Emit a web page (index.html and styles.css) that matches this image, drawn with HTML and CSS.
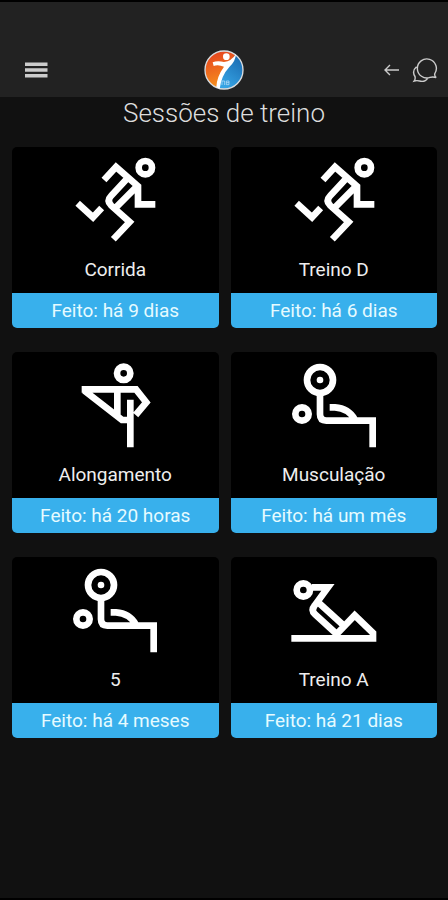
FILE: index.html
```html
<!DOCTYPE html>
<html lang="pt-BR">
<head>
<meta charset="utf-8">
<meta name="viewport" content="width=device-width, initial-scale=1">
<title>Sessões de treino</title>
<link rel="stylesheet" href="styles.css">
</head>
<body>
<svg class="sprite" aria-hidden="true">
  <symbol id="run" viewBox="0 0 300 300">
    <circle cx="241" cy="53" r="20"/>
    <path d="M117 90L153 51L219 109V163H271M188 84L138 138Q124 152 139 167L194 216L145 268M215 110L153 172M38 160L84 202L110 174"/>
  </symbol>
  <symbol id="stretch" viewBox="-15 0 300 300">
    <circle cx="161" cy="55" r="20"/>
    <path d="M181 277V134M181 195H156L43 107M35 103H198L229 142L197 180M142 103V185"/>
  </symbol>
  <symbol id="bench" viewBox="11 0 300 300">
    <circle cx="119" cy="75" r="39"/>
    <circle class="dot" cx="119" cy="75" r="10"/>
    <circle cx="65" cy="177" r="20"/>
    <path d="M119 116V178Q119 197 138 197H277V277M148 157H164Q205 160 223 193"/>
  </symbol>
  <symbol id="situp" viewBox="11 0 300 300">
    <circle cx="69" cy="90" r="20"/>
    <path d="M33 235H278V219L223 166L169 222L104 163Q91 151 102 138L143 82H94M115 128L186 193"/>
  </symbol>
</svg>

<header class="topbar">
  <button class="icon-button menu" type="button" aria-label="Menu">
    <svg width="24" height="16" viewBox="0 0 24 16"><path d="M1 2.2H23.5M1 8H23.5M1 13.8H23.5"/></svg>
  </button>
  <svg class="logo" width="40" height="40" viewBox="0 0 120 120" role="img" aria-label="7">
    <defs>
      <linearGradient id="warm" x1="0" y1="0" x2="0.3" y2="1"><stop offset="0" stop-color="#e43d20"/><stop offset="1" stop-color="#f7941d"/></linearGradient>
      <linearGradient id="cool" x1="1" y1="0" x2="0.4" y2="1"><stop offset="0" stop-color="#1766ad"/><stop offset="1" stop-color="#36a4e4"/></linearGradient>
    </defs>
    <circle cx="60" cy="60" r="57" fill="url(#warm)"/>
    <path d="M94 14A57 57 0 0 1 40 113C43 82 58 60 94 14Z" fill="url(#cool)"/>
    <circle cx="60" cy="60" r="57" fill="none" stroke="#d8dce0" stroke-width="4"/>
    <circle cx="67" cy="20" r="10" fill="#fff"/>
    <path d="M26 37Q40 31 60 36Q83 33 96 12Q95 33 76 51Q52 77 47 116L37 112Q38 80 60 50Q42 42 29 48Z" fill="#fff"/>
    <path d="M54 105V93H62V105M67 93H75V104H67ZM67 98H75" fill="none" stroke="#c5e5fa" stroke-width="2"/>
  </svg>
  <nav class="actions">
    <button class="icon-button" type="button" aria-label="Voltar">
      <svg width="16" height="14" viewBox="0 0 16 14"><path d="M15 7H1M6 2L1 7L6 12"/></svg>
    </button>
    <button class="icon-button chat" type="button" aria-label="Mensagens">
      <svg width="26" height="26" viewBox="0 0 26 26"><path d="M22.7 16.8A9.5 9.5 0 1 0 18 20.4Q21 19.5 24.2 20.6Q22.4 18.9 22.7 16.8ZM4.5 9.8C1.4 12.5 1 16.4 3 19.5Q3.6 22 2.2 24Q5 23.2 7.6 24C11 25 14 23.8 16 20.8"/></svg>
    </button>
  </nav>
</header>

<main class="content">
  <h1 class="title">Sessões de treino</h1>
  <div class="sessions">
    <a class="card" href="#corrida"><svg class="figure" aria-hidden="true"><use href="#run"/></svg><span class="name">Corrida</span><span class="status">Feito: há 9 dias</span></a>
    <a class="card" href="#treino-d"><svg class="figure" aria-hidden="true"><use href="#run"/></svg><span class="name">Treino D</span><span class="status">Feito: há 6 dias</span></a>
    <a class="card" href="#alongamento"><svg class="figure" aria-hidden="true"><use href="#stretch"/></svg><span class="name">Alongamento</span><span class="status">Feito: há 20 horas</span></a>
    <a class="card" href="#musculacao"><svg class="figure" aria-hidden="true"><use href="#bench"/></svg><span class="name">Musculação</span><span class="status">Feito: há um mês</span></a>
    <a class="card" href="#treino-5"><svg class="figure" aria-hidden="true"><use href="#bench"/></svg><span class="name">5</span><span class="status">Feito: há 4 meses</span></a>
    <a class="card" href="#treino-a"><svg class="figure" aria-hidden="true"><use href="#situp"/></svg><span class="name">Treino A</span><span class="status">Feito: há 21 dias</span></a>
  </div>
</main>
</body>
</html>
```

FILE: styles.css
```css
* {
  box-sizing: border-box;
}

body {
  margin: 0;
  min-height: 100vh;
  border-top: 2px solid #000;
  border-bottom: 2px solid #000;
  background: #111;
  color: #eee;
  font-family: Roboto, "Liberation Sans", sans-serif;
}

.sprite {
  display: none;
}

.topbar {
  display: grid;
  grid-template-columns: 1fr auto 1fr;
  align-items: center;
  padding: 48px 10px 7px 24px;
  background: #222;
}

.icon-button {
  display: flex;
  padding: 0;
  border: 0;
  background: none;
  cursor: pointer;
}

.icon-button path {
  fill: none;
  stroke: #ccc;
  stroke-width: 1.4;
}

.icon-button.menu {
  justify-self: start;
}

.icon-button.menu path {
  stroke-width: 3.6;
}

.logo {
  margin-right: 14px;
}

.actions {
  display: flex;
  align-items: center;
  justify-self: end;
  gap: 12px;
}

.title {
  margin: 0;
  color: #ddd;
  font-size: 26px;
  font-weight: 300;
  line-height: 32px;
  text-align: center;
}

.sessions {
  display: grid;
  grid-template-columns: 1fr 1fr;
  gap: 24px 12px;
  padding: 18px 11px 24px 12px;
}

.card {
  display: flex;
  flex-direction: column;
  align-items: center;
  overflow: hidden;
  border-radius: 5px;
  background: #000;
  color: #eee;
  font-size: 19px;
  text-align: center;
  text-decoration: none;
}

.figure {
  width: 100px;
  height: 100px;
  margin-top: 3px;
  fill: none;
  stroke: #fff;
  stroke-width: 20;
}

.dot {
  fill: #fff;
  stroke: none;
}

.name {
  padding: 8px 8px 11px;
  line-height: 24px;
}

.status {
  align-self: stretch;
  background: #38b0ec;
  color: #e6fbff;
  line-height: 35px;
}
```
